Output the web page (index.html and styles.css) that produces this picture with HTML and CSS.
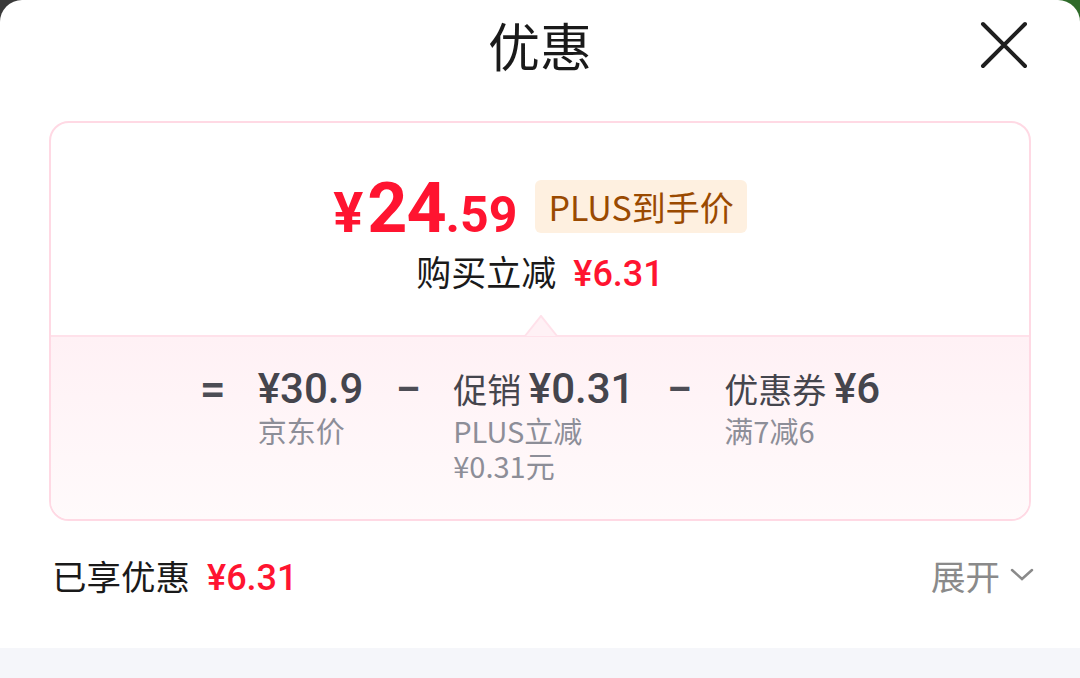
FILE: index.html
```html
<!DOCTYPE html>
<html>
<head>
    <title>优惠</title>
    <link rel="stylesheet" href="styles.css">
</head>
<body>
    <div class="sheet">
        <div class="header">
            <span></span>
            <h2 class="title">优惠</h2>
            <button class="close" aria-label="关闭">
                <svg width="48" height="48" viewBox="0 0 48 48"><path d="M3 3 L45 45 M45 3 L3 45" stroke="#1f1f1f" stroke-width="4" stroke-linecap="round"/></svg>
            </button>
        </div>

        <div class="card">
            <div class="summary">
                <div class="priceLine">
                    <div class="price"><span class="yen">¥</span><span class="int">24</span><span class="dec">.59</span></div>
                    <div class="badge">PLUS到手价</div>
                </div>
                <div class="saved">购买立减<span class="red">¥6.31</span></div>
            </div>

            <div class="detail">
                <!-- little arrow pointing up at the summary -->
                <svg class="arrow" width="40" height="22" viewBox="0 0 40 22"><polygon points="4,21 20,1 36,21" fill="#fff1f5"/><polyline points="4,21 20,1 36,21" fill="none" stroke="#ffe1ea" stroke-width="2"/></svg>
                <div class="calc">
                    <div class="op">=</div>
                    <div class="item">
                        <div class="main"><span class="num">¥30.9</span></div>
                        <div class="sub">京东价</div>
                    </div>
                    <div class="op">−</div>
                    <div class="item">
                        <div class="main">促销 <span class="num">¥0.31</span></div>
                        <div class="sub">PLUS立减</div>
                        <div class="sub">¥0.31元</div>
                    </div>
                    <div class="op">−</div>
                    <div class="item">
                        <div class="main">优惠券 <span class="num">¥6</span></div>
                        <div class="sub">满7减6</div>
                    </div>
                </div>
            </div>
        </div>

        <div class="footer">
            <div class="total">已享优惠<span class="red">¥6.31</span></div>
            <div class="expand">展开
                <svg width="24" height="14" viewBox="0 0 24 14"><polyline points="2,2 12,11 22,2" fill="none" stroke="#8a8a8a" stroke-width="2.5" stroke-linecap="round"/></svg>
            </div>
        </div>

        <div class="strip"></div>
    </div>
</body>
</html>
```

FILE: styles.css
```css
/* page */
body {
    margin: 0;
    background: linear-gradient(90deg, #3a3a3a 0%, #3a3a3a 50%, #2f6b2a 50%, #2f6b2a 100%);
    font-family: 'Noto Sans CJK SC', 'Noto Sans', sans-serif;
    width: 1080px;
    height: 678px;
    overflow: hidden;
}
.sheet {
    background: #fff;
    border-radius: 22px 22px 0 0;
    height: 678px;
    display: flex;
    flex-direction: column;
}
/* header */
.header {
    display: grid;
    grid-template-columns: 1fr auto 1fr;
    align-items: center;
    height: 96px;
}
.title {
    margin: 0;
    font-size: 52px;
    font-weight: 400;
    color: #1a1a1a;
    line-height: 1;
    padding-bottom: 6px;
}
.close {
    justify-self: end;
    margin-right: 52px;
    margin-bottom: 6px;
    background: none;
    border: none;
    padding: 0;
    display: flex;
}
/* card */
.card {
    margin: 25px 49px 0;
    border: 2.5px solid #ffd9e4;
    border-radius: 20px;
    height: 400px;
    box-sizing: border-box;
    display: flex;
    flex-direction: column;
    overflow: hidden;
}
.summary {
    height: 212px;
    display: flex;
    flex-direction: column;
    align-items: center;
    padding-top: 50px;
    box-sizing: border-box;
}
.priceLine {
    display: flex;
    align-items: center;
    gap: 18px;
}
.price {
    color: #ff1430;
    font-family: Roboto, 'Noto Sans', sans-serif;
    font-weight: 700;
    line-height: 1;
    display: flex;
    align-items: baseline;
}
.yen { font-size: 56px; margin-right: 4px; }
.int { font-size: 70px; letter-spacing: -1px; }
.dec { font-size: 50px; }
.badge {
    background: #fef0e0;
    color: #9a4a00;
    font-size: 34px;
    line-height: 53px;
    padding: 0 13px;
    border-radius: 6px;
    margin-top: -4px;
}
.saved {
    margin-top: 8px;
    font-size: 35px;
    color: #1a1a1a;
    line-height: 40px;
}
.red {
    color: #ff1430;
    font-family: Roboto, 'Noto Sans', sans-serif;
    font-weight: 500;
    font-size: 36px;
    margin-left: 17px;
}
/* breakdown */
.detail {
    flex: 1;
    position: relative;
    border-top: 2px solid #ffe1ea;
    background: linear-gradient(180deg, #fff1f5 0%, #fffafb 100%);
}
.arrow {
    position: absolute;
    top: -22px;
    left: 470px;
}
.calc {
    display: flex;
    justify-content: center;
    align-items: flex-start;
    gap: 32px;
    padding-top: 28px;
}
.op {
    font-family: Roboto, 'Noto Sans', sans-serif;
    font-size: 46px;
    font-weight: 500;
    color: #4d4d55;
    line-height: 48px;
}
.main {
    font-size: 34px;
    color: #45454d;
    line-height: 48px;
}
.num {
    font-family: Roboto, 'Noto Sans', sans-serif;
    font-size: 42px;
    font-weight: 500;
}
.sub {
    font-size: 29px;
    color: #8d8e98;
    line-height: 35px;
}
/* footer */
.footer {
    display: flex;
    justify-content: space-between;
    align-items: center;
    padding: 0 46px 20px 52px;
    height: 127px;
    box-sizing: border-box;
}
.total {
    font-size: 34.5px;
    color: #1a1a1a;
}
.expand {
    font-size: 34.5px;
    color: #8a8a8a;
    display: flex;
    align-items: center;
    gap: 10px;
}
.strip {
    flex: 1;
    background: #f5f6fa;
}
```
